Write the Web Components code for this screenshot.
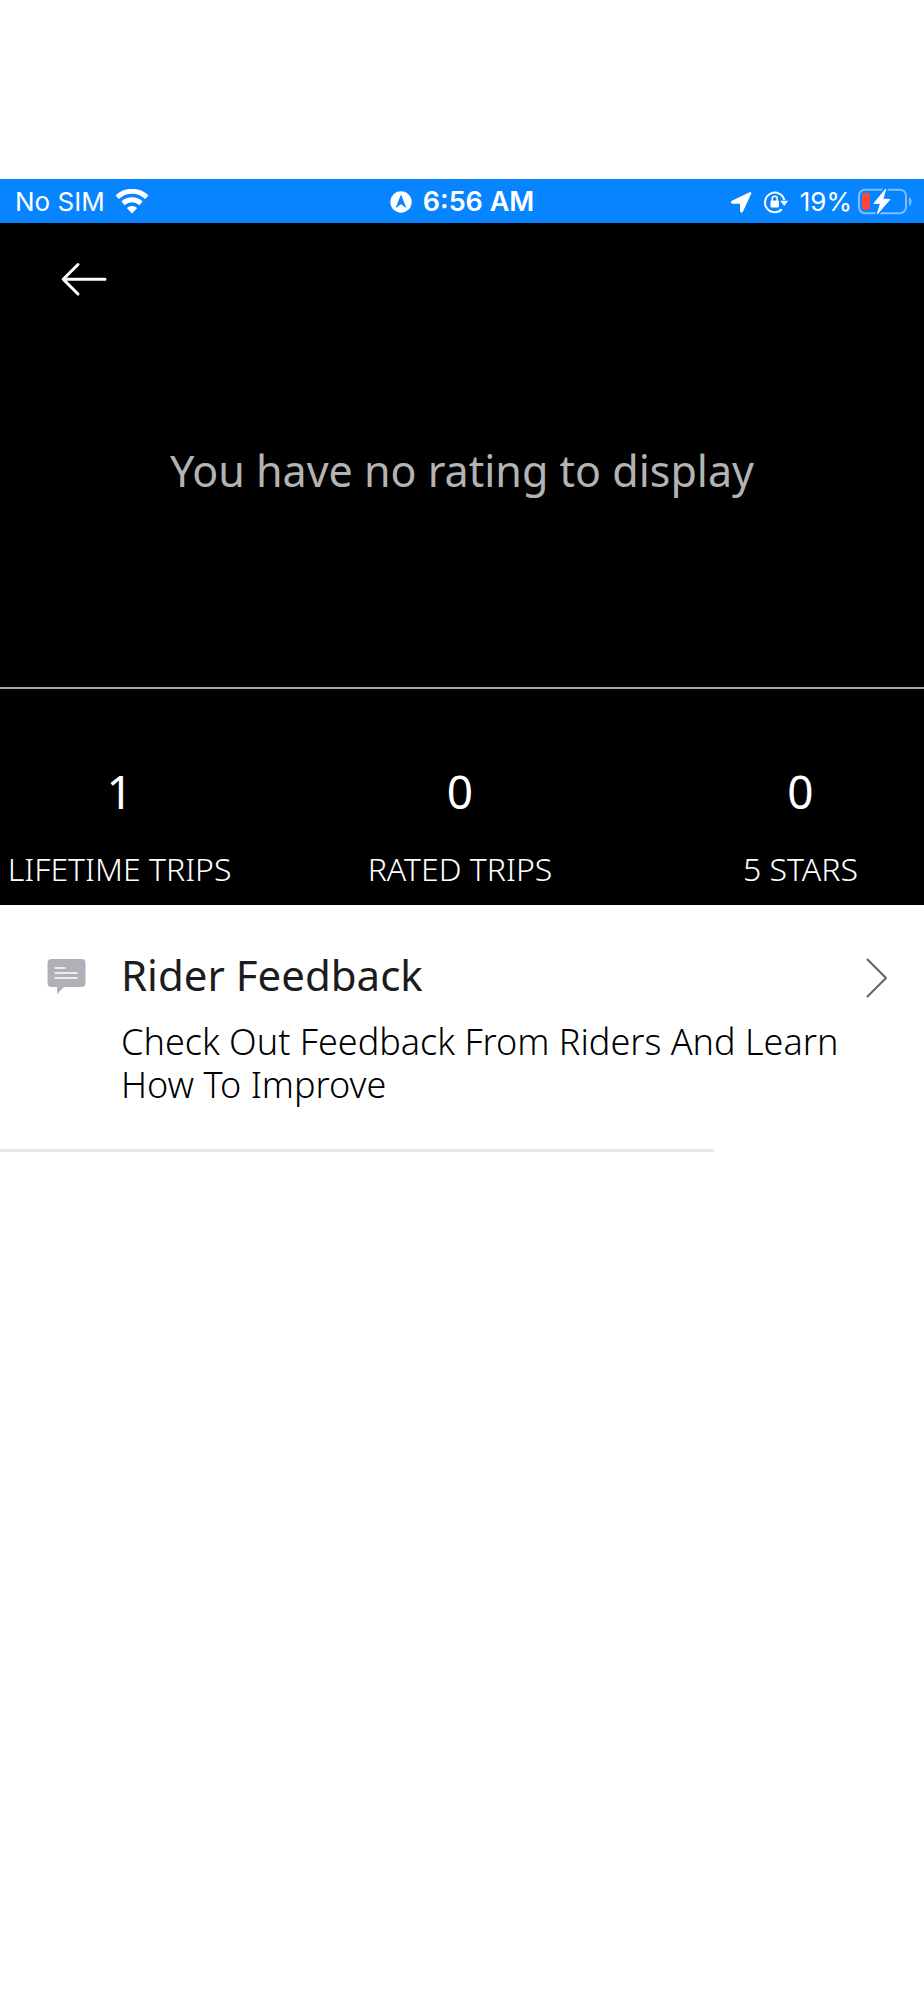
<!DOCTYPE html>
<html lang="en">
<head>
<meta charset="utf-8">
<meta name="viewport" content="width=device-width, initial-scale=1">
<title>Ratings</title>
<style>
body { margin: 0; background: #fff; font-family: "Noto Sans", "Open Sans", sans-serif; }
</style>
</head>
<body>
<ratings-screen></ratings-screen>

<script>
const define = (name, html) => {
  const template = document.createElement('template');
  template.innerHTML = html;
  customElements.define(name, class extends HTMLElement {
    constructor() {
      super();
      this.attachShadow({ mode: 'open' }).append(template.content.cloneNode(true));
    }
  });
};

define('status-bar', `
<style>
  :host { display: grid; grid-template-columns: 1fr auto 1fr; align-items: center; padding: 2px 11px 0;
    background: #0784ff; color: #fff; font: 400 26px/42px Inter, "Liberation Sans", sans-serif; white-space: nowrap; }
  div { display: flex; align-items: center; }
  svg { display: block; flex: none; }
  .left { gap: 10px; padding-left: 4px; }
  .center { gap: 11px; font-size: 27px; font-weight: 600; }
  .right { gap: 11px; justify-content: flex-end; }
  .battery { margin-left: -6px; }
</style>
<div class="left">
  <span>No SIM</span>
  <svg width="34" height="26" viewBox="0 0 34 26" fill="none" stroke="#fff" stroke-width="5" aria-label="Wi-Fi">
    <path d="M2.2 8.2a21.5 21.5 0 0 1 29.6 0"/><path d="M8 14.4a13.2 13.2 0 0 1 18 0"/>
    <path d="M17 24.5l-5.2-5.4a7.6 7.6 0 0 1 10.4 0z" fill="#fff" stroke="none"/>
  </svg>
</div>
<div class="center">
  <svg width="22" height="22" viewBox="0 0 22 22" aria-label="Location in use">
    <circle cx="11" cy="11" r="10.7" fill="#fff"/><path d="M11 3.4l5.4 13.7L11 13.2l-5.4 3.9z" fill="#0784ff"/>
  </svg>
  <span>6:56 AM</span>
</div>
<div class="right">
  <svg width="22" height="22" viewBox="0 0 22 22" aria-label="Location">
    <path d="M2 10.2L20 1.6c.7-.2 1.1.2.8.9l-8.4 18.2c-.5.9-1.8.7-1.8-.3v-8.2H2.4c-1.3 0-1.5-1.5-.4-2z" fill="#fff" stroke="#fff"/>
  </svg>
  <svg width="26" height="24" viewBox="0 0 26 24" fill="none" stroke="#fff" stroke-width="2" aria-label="Rotation locked">
    <path d="M21.3 10A9.8 9.8 0 1 0 18.8 19.3"/>
    <path d="M17.2 10.7h7.8L21.2 16z" fill="#fff" stroke="none"/>
    <rect x="7.5" y="10.5" width="8.4" height="7" rx="1" fill="#fff" stroke="none"/>
    <path d="M9.2 11.5V8.8a2.5 2.5 0 0 1 5 0v2.7" stroke-width="1.5"/>
  </svg>
  <span>19%</span>
  <svg class="battery" width="56" height="28" viewBox="0 0 56 28" aria-label="Battery charging">
    <rect x="2" y="1.7" width="47" height="23.6" rx="6" fill="none" stroke="#7dbdff" stroke-width="2"/>
    <path d="M52 9c3.5 1.4 3.5 7.6 0 9z" fill="#7dbdff"/>
    <rect x="5" y="5" width="8" height="17" rx="3" fill="#ff453a"/>
    <path d="M28.8 1L17 15.3h6.500L20.300 26 33 11.300h-7.200z" fill="#fff" stroke="#0784ff" stroke-width="4" stroke-linejoin="round"/>
    <path d="M28.8 1L17 15.300h6.500L20.300 26 33 11.300h-7.200z" fill="#fff" stroke="#fff" stroke-linejoin="round"/>
  </svg>
</div>`);

define('rating-hero', `
<style>
  :host { display: block; padding-bottom: 188px; background: #000; color: #b3b3b3; border-bottom: 2px solid #a6a6a6; }
  button { display: flex; margin: 0; padding: 36px 56px; border: 0; background: none; color: #fff; }
  h1 { margin: 0; padding-top: 108px; font-weight: 400; font-size: 43px; line-height: 56px; text-align: center; }
</style>
<button aria-label="Back">
  <svg width="56" height="40" viewBox="0 0 56 40" fill="none" stroke="currentColor" stroke-width="3" stroke-linecap="round" stroke-linejoin="round">
    <path d="M49 20.3H7.5M22 5.5L7.2 20.3 22 35"/>
  </svg>
</button>
<h1><slot></slot></h1>`);

define('stat-item', `
<style>
  :host { display: flex; flex-direction: column; align-items: center; gap: 26px; color: #fff; white-space: nowrap; }
  .value { font-size: 46px; line-height: 64px; }
  .label { font-size: 32px; line-height: 40px; font-weight: 300; }
</style>
<div class="value"><slot name="value"></slot></div>
<div class="label"><slot></slot></div>`);

define('stat-row', `
<style>
  :host { display: grid; grid-template-columns: 26% 1fr 26%; padding: 70px 4px 16px 0; background: #000; }
</style>
<slot></slot>`);

define('feedback-link', `
<style>
  :host { display: block; }
  a { display: grid; grid-template-columns: 40px 1fr 24px; column-gap: 34px; padding: 42px 36px 43px 47px; color: #000; text-decoration: none; }
  svg { display: block; margin-top: 11px; }
  .title { margin: 0; font-size: 42px; font-weight: 400; line-height: 56px; color: #1c1c1c; }
  .text { margin: 17px -24px 0 0; font-size: 36px; line-height: 43px; font-weight: 300; }
  hr { width: 77.3%; height: 3px; margin: 0; border: 0; background: #e8e8e8; }
</style>
<a href="#feedback">
  <svg width="40" height="38" viewBox="0 0 40 38" aria-hidden="true">
    <path d="M4.5 1h30a4 4 0 0 1 4 4v20a4 4 0 0 1-4 4H17l-7 7v-7H4.5a4 4 0 0 1-4-4V5a4 4 0 0 1 4-4z" fill="#b0b1b8"/>
    <path d="M8 10h10M8 15h22M8 20h22" stroke="#fff" stroke-width="1.5" stroke-linecap="round"/>
  </svg>
  <div>
    <h2 class="title"><slot name="title"></slot></h2>
    <p class="text"><slot></slot></p>
  </div>
  <svg width="24" height="40" viewBox="0 0 24 40" fill="none" stroke="#636363" stroke-width="2" stroke-linecap="round" stroke-linejoin="round" aria-hidden="true">
    <path d="M3.5 1.5L22 20 3.5 38.5"/>
  </svg>
</a>
<hr>`);

define('ratings-screen', `
<style>
  :host { display: block; padding-top: 179px; }
</style>
<status-bar></status-bar>
<main>
  <rating-hero>You have no rating to display</rating-hero>
  <stat-row>
    <stat-item><span slot="value">1</span>LIFETIME TRIPS</stat-item>
    <stat-item><span slot="value">0</span>RATED TRIPS</stat-item>
    <stat-item><span slot="value">0</span>5 STARS</stat-item>
  </stat-row>
  <feedback-link><span slot="title">Rider Feedback</span>Check Out Feedback From Riders And Learn How To Improve</feedback-link>
</main>`);
</script>
</body>
</html>
